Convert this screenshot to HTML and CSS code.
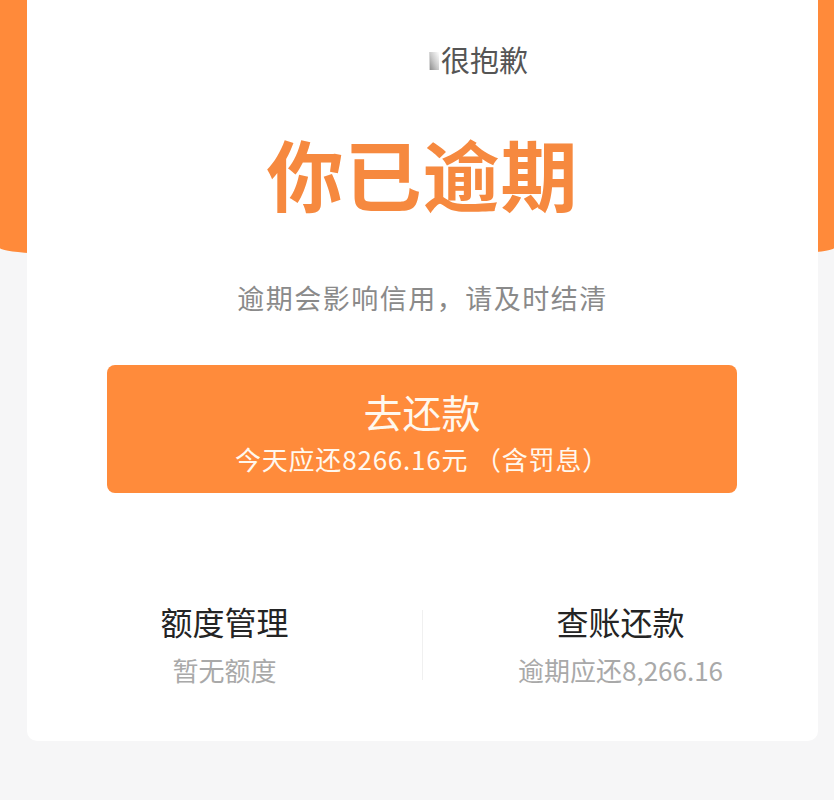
FILE: index.html
```html
<!DOCTYPE html>
<html lang="zh-CN">
<head>
<meta charset="utf-8">
<title>你已逾期</title>
<link rel="stylesheet" href="styles.css">
</head>
<body>
<div class="page">
  <div class="hero"></div>
  <div class="card">
    <div class="sorry">
      <span class="broken-img"></span>
      <span class="sorry-text">很抱歉</span>
    </div>
    <h1 class="title">你已逾期</h1>
    <p class="subtitle">逾期会影响信用，请及时结清</p>
    <div class="pay-btn">
      <div class="pay-main">去还款</div>
      <div class="pay-sub">今天应还8266.16元 （含罚息）</div>
    </div>
    <div class="stats">
      <div class="stat">
        <div class="stat-title">额度管理</div>
        <div class="stat-sub">暂无额度</div>
      </div>
      <div class="divider"></div>
      <div class="stat">
        <div class="stat-title">查账还款</div>
        <div class="stat-sub">逾期应还8,266.16</div>
      </div>
    </div>
  </div>
</div>
</body>
</html>
```

FILE: styles.css
```css
* {
  box-sizing: border-box;
}

html, body {
  margin: 0;
  padding: 0;
}

body {
  background: #f6f6f7;
  font-family: "Noto Sans CJK SC", "Noto Sans", "Liberation Sans", sans-serif;
  width: 834px;
  height: 800px;
  overflow: hidden;
}

.page {
  width: 834px;
}

.hero {
  height: 262px;
  background: #ff8a3a;
  border-radius: 0 0 50% 50% / 0 0 14px 14px;
}

.card {
  margin: -262px 16px 0 27px;
  background: #ffffff;
  border-radius: 0 0 10px 10px;
  padding: 39px 0 53px;
  display: flex;
  flex-direction: column;
}

.sorry {
  display: flex;
  justify-content: center;
  align-items: center;
  padding-left: 112px;
  height: 40px;
}

.broken-img {
  width: 10px;
  height: 18px;
  margin-right: 2px;
  margin-top: 4px;
  background: linear-gradient(to top right, #8d8d8d 0%, #c8c8c8 45%, #ffffff 100%);
  border-left: 1px solid #d6d6d6;
}

.sorry-text {
  font-size: 29px;
  line-height: 40px;
  color: #555555;
}

.title {
  margin: 54px 0 0;
  font-size: 77px;
  line-height: 80px;
  font-weight: 700;
  color: #f6893f;
  text-align: center;
  letter-spacing: 1px;
}

.subtitle {
  margin: 67px 0 0;
  font-size: 27px;
  line-height: 36px;
  color: #8a8a8a;
  text-align: center;
  letter-spacing: 1.5px;
}

.pay-btn {
  margin: 49px 81px 0 80px;
  height: 128px;
  background: #ff8b3b;
  border-radius: 8px;
  padding: 21px 0 18px;
  display: flex;
  flex-direction: column;
  align-items: center;
  gap: 7px;
  color: #fff8ee;
}

.pay-main {
  font-size: 39px;
  line-height: 50px;
}

.pay-sub {
  font-size: 26px;
  line-height: 32px;
  letter-spacing: 0.8px;
}

.stats {
  margin-top: 108px;
  display: flex;
  align-items: center;
}

.stat {
  flex: 1;
  display: flex;
  flex-direction: column;
  align-items: center;
  gap: 11px;
}

.stat-title {
  font-size: 32px;
  line-height: 40px;
  color: #242424;
}

.stat-sub {
  font-size: 26px;
  line-height: 36px;
  color: #a9a9a9;
}

.divider {
  width: 1px;
  height: 70px;
  background: #f0f0f0;
}
```
